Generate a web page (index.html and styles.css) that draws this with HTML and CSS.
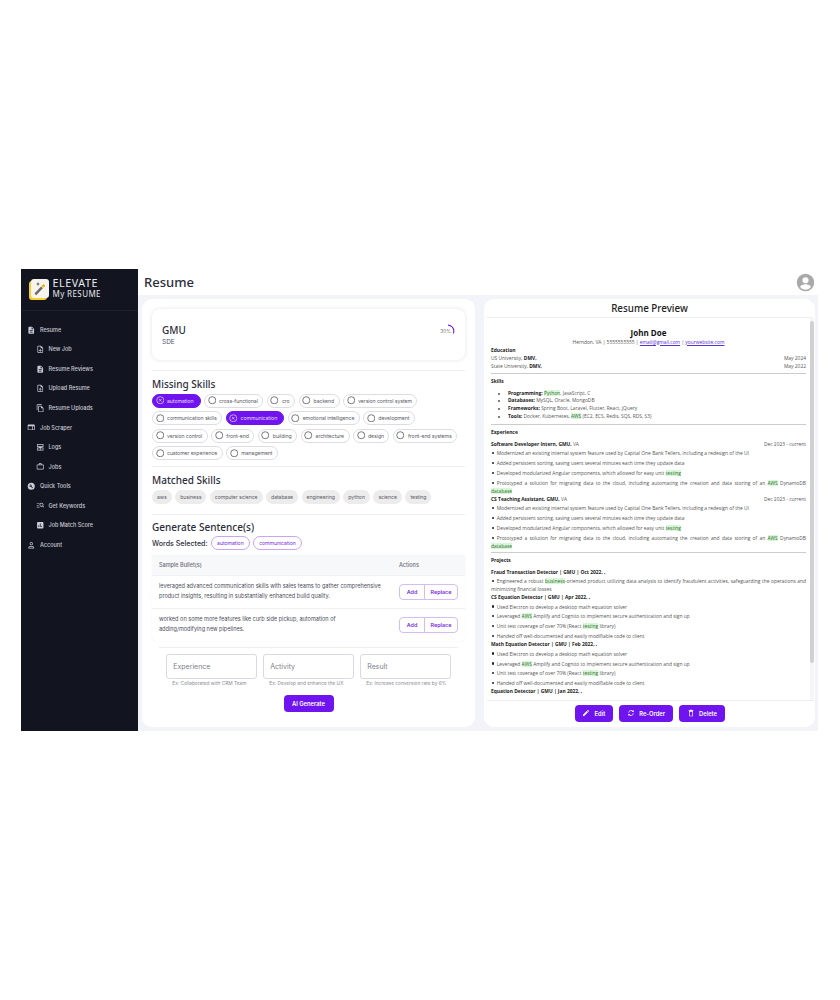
FILE: index.html
```html
<!DOCTYPE html>
<html lang="en">
<head>
    <meta charset="UTF-8">
    <meta name="viewport" content="width=device-width, initial-scale=1.0">
    <title>Elevate My Resume</title>
    <link rel="stylesheet" href="styles.css">
</head>
<body>
    <svg class="sprites" width="0" height="0">
        <symbol id="i-doc" viewBox="0 0 24 24"><path d="M14 2H6c-1.1 0-2 .9-2 2v16c0 1.1.9 2 2 2h12c1.1 0 2-.9 2-2V8l-6-6zm2 16H8v-2h8v2zm0-4H8v-2h8v2zm-3-5V3.5L18.5 9H13z"/></symbol>
        <symbol id="i-add" viewBox="0 0 24 24"><path d="M14 2H6c-1.1 0-2 .9-2 2v16c0 1.1.9 2 2 2h12c1.1 0 2-.9 2-2V8l-6-6zm4 18H6V4h7v5h5v11zM13 11h-2v3H8v2h3v3h2v-3h3v-2h-3z"/></symbol>
        <symbol id="i-upload" viewBox="0 0 24 24"><path d="M14 2H6c-1.1 0-2 .9-2 2v16c0 1.1.9 2 2 2h12c1.1 0 2-.9 2-2V8l-6-6zm4 18H6V4h7v5h5v11zM8 15l1.4 1.4L11 14.8V19h2v-4.2l1.6 1.6L16 15l-4-4z"/></symbol>
        <symbol id="i-copy" viewBox="0 0 24 24"><path d="M16 1H4c-1.1 0-2 .9-2 2v14h2V3h12V1zm-1 4l6 6v10c0 1.1-.9 2-2 2H8c-1.1 0-2-.9-2-2V7c0-1.1.9-2 2-2h7zm-1 7V7H8v14h11v-9h-5z"/></symbol>
        <symbol id="i-scraper" viewBox="0 0 24 24"><path d="M20 4H4c-1.1 0-2 .9-2 2v12c0 1.1.9 2 2 2h16c1.100 0 2-.9 2-2V6c0-1.100-.9-2-2-2zM4 18V9h11v9H4zm16 0h-3V9h3v9z"/></symbol>
        <symbol id="i-logs" viewBox="0 0 24 24"><path d="M3 3h18v8H3V3zm2 2v4h14V5H5zm-2 8h18v8H3v-8zm2 2v4h6v-4H5zm8 0v4h6v-4h-6zM8 11h8v2H8z"/></symbol>
        <symbol id="i-jobs" viewBox="0 0 24 24"><path d="M20 7h-4V5c0-1.100-.9-2-2-2h-4c-1.100 0-2 .9-2 2v2H4c-1.100 0-2 .9-2 2v10c0 1.100.9 2 2 2h16c1.100 0 2-.9 2-2V9c0-1.100-.9-2-2-2zM10 5h4v2h-4V5zm10 14H4V9h16v10z"/></symbol>
        <symbol id="i-tools" viewBox="0 0 24 24"><path d="M12 2a10 10 0 100 20 10 10 0 000-20zm4.700 14.300l-1.400 1.400-4.100-4.100c-1.200.4-2.600.2-3.600-.8-1-1-1.300-2.500-.8-3.800l2.300 2.300 1.500-1.500-2.300-2.300c1.300-.5 2.800-.2 3.800.8 1 1 1.300 2.400.8 3.600l3.800 4.400z"/></symbol>
        <symbol id="i-keywords" viewBox="0 0 24 24"><path d="M2 6h8v2H2V6zm0 5h6v2H2v-2zm0 5h8v2H2v-2zm13.500-11a5.500 5.500 0 014.400 8.800l2.800 2.800-1.400 1.400-2.800-2.800A5.500 5.500 0 1115.500 5zm0 2a3.500 3.500 0 100 7 3.500 3.500 0 000-7z"/></symbol>
        <symbol id="i-score" viewBox="0 0 24 24"><path d="M19 3H5c-1.100 0-2 .9-2 2v14c0 1.100.9 2 2 2h14c1.100 0 2-.9 2-2V5c0-1.100-.9-2-2-2zM9 17H7v-5h2v5zm4 0h-2V7h2v10zm4 0h-2v-3h2v3z"/></symbol>
        <symbol id="i-account" viewBox="0 0 24 24"><path d="M12 3a4.500 4.500 0 110 9 4.500 4.500 0 010-9zm0 2a2.500 2.500 0 100 5 2.500 2.500 0 000-5zM4 21v-3c0-2.700 5.300-4 8-4s8 1.300 8 4v3H4zm2-2h12v-1c0-.8-3-2-6-2s-6 1.200-6 2v1z"/></symbol>
        <symbol id="i-circle" viewBox="0 0 24 24"><circle cx="12" cy="12" r="10" fill="none" stroke="currentColor" stroke-width="2"/></symbol>
        <symbol id="i-cancel" viewBox="0 0 24 24"><circle cx="12" cy="12" r="10" fill="none" stroke="currentColor" stroke-width="2"/><path d="M8.500 8.500l7 7m0-7l-7 7" fill="none" stroke="currentColor" stroke-width="2"/></symbol>
    </svg>

    <div class="app">
        <!-- Sidebar -->
        <aside class="sidebar">
            <div class="brand">
                <div class="logo">
                    <svg viewBox="0 0 20 22" width="20" height="22">
                        <rect x="0" y="3" width="18" height="19" rx="3" fill="#f7cf2f"/>
                        <rect x="2" y="1" width="18" height="19" rx="3" fill="#f6f4ec"/>
                        <path d="M5.500 15.500L12 8.500l1.800 1.700-6.600 7z" fill="#6b6b6b"/>
                        <path d="M12.500 8l2-2 1.800 1.700-2 2z" fill="#e8b400"/>
                        <path d="M9 4l.6 1.500L11 6l-1.400.6L9 8l-.6-1.400L7 6l1.400-.5z" fill="#555"/>
                    </svg>
                </div>
                <div class="brand-text">
                    <div class="brand-top">ELEVATE</div>
                    <div class="brand-bottom">My RESUME</div>
                </div>
            </div>
            <nav class="nav">
                <a class="nav-item"><svg class="nav-icon"><use href="#i-doc"/></svg>Resume</a>
                <a class="nav-item sub"><svg class="nav-icon"><use href="#i-add"/></svg>New Job</a>
                <a class="nav-item sub"><svg class="nav-icon"><use href="#i-doc"/></svg>Resume Reviews</a>
                <a class="nav-item sub"><svg class="nav-icon"><use href="#i-upload"/></svg>Upload Resume</a>
                <a class="nav-item sub"><svg class="nav-icon"><use href="#i-copy"/></svg>Resume Uploads</a>
                <a class="nav-item"><svg class="nav-icon"><use href="#i-scraper"/></svg>Job Scraper</a>
                <a class="nav-item sub"><svg class="nav-icon"><use href="#i-logs"/></svg>Logs</a>
                <a class="nav-item sub"><svg class="nav-icon"><use href="#i-jobs"/></svg>Jobs</a>
                <a class="nav-item"><svg class="nav-icon"><use href="#i-tools"/></svg>Quick Tools</a>
                <a class="nav-item sub"><svg class="nav-icon"><use href="#i-keywords"/></svg>Get Keywords</a>
                <a class="nav-item sub"><svg class="nav-icon"><use href="#i-score"/></svg>Job Match Score</a>
                <a class="nav-item"><svg class="nav-icon"><use href="#i-account"/></svg>Account</a>
            </nav>
        </aside>

        <div class="main">
            <header class="topbar">
                <h1>Resume</h1>
                <svg class="avatar" viewBox="0 0 24 24"><path d="M12 2a10 10 0 100 20 10 10 0 000-20zm0 4a3.500 3.500 0 110 7 3.500 3.500 0 010-7zm0 14.200c-2.500 0-4.700-1.300-6-3.200 0-2 4-3.100 6-3.100s6 1.100 6 3.100c-1.300 1.900-3.500 3.200-6 3.200z"/></svg>
            </header>

            <div class="content">
                <!-- Left column -->
                <section class="panel left">
                    <div class="job-card">
                        <div>
                            <div class="job-company">GMU</div>
                            <div class="job-role">SDE</div>
                        </div>
                        <div class="score">
                            <svg viewBox="0 0 14 14" width="14" height="14"><path d="M7 1.200A5.800 5.800 0 0112.800 7 5.800 5.800 0 0112.300 9.400" fill="none" stroke="#7a2be8" stroke-width="1.200"/></svg>
                            <span>30%</span>
                        </div>
                    </div>
                    <hr class="rule">

                    <h2>Missing Skills</h2>
                    <div class="chips">
                        <span class="chip on"><svg class="chip-icon"><use href="#i-cancel"/></svg>automation</span>
                        <span class="chip"><svg class="chip-icon"><use href="#i-circle"/></svg>cross-functional</span>
                        <span class="chip"><svg class="chip-icon"><use href="#i-circle"/></svg>cro</span>
                        <span class="chip"><svg class="chip-icon"><use href="#i-circle"/></svg>backend</span>
                        <span class="chip"><svg class="chip-icon"><use href="#i-circle"/></svg>version control system</span>
                        <span class="chip"><svg class="chip-icon"><use href="#i-circle"/></svg>communication skills</span>
                        <span class="chip on"><svg class="chip-icon"><use href="#i-cancel"/></svg>communication</span>
                        <span class="chip"><svg class="chip-icon"><use href="#i-circle"/></svg>emotional intelligence</span>
                        <span class="chip"><svg class="chip-icon"><use href="#i-circle"/></svg>development</span>
                        <span class="chip"><svg class="chip-icon"><use href="#i-circle"/></svg>version control</span>
                        <span class="chip"><svg class="chip-icon"><use href="#i-circle"/></svg>front-end</span>
                        <span class="chip"><svg class="chip-icon"><use href="#i-circle"/></svg>building</span>
                        <span class="chip"><svg class="chip-icon"><use href="#i-circle"/></svg>architecture</span>
                        <span class="chip"><svg class="chip-icon"><use href="#i-circle"/></svg>design</span>
                        <span class="chip"><svg class="chip-icon"><use href="#i-circle"/></svg>front-end systems</span>
                        <span class="chip"><svg class="chip-icon"><use href="#i-circle"/></svg>customer experience</span>
                        <span class="chip"><svg class="chip-icon"><use href="#i-circle"/></svg>management</span>
                    </div>
                    <hr class="rule tight">

                    <h2>Matched Skills</h2>
                    <div class="chips">
                        <span class="chip grey">aws</span>
                        <span class="chip grey">business</span>
                        <span class="chip grey">computer science</span>
                        <span class="chip grey">database</span>
                        <span class="chip grey">engineering</span>
                        <span class="chip grey">python</span>
                        <span class="chip grey">science</span>
                        <span class="chip grey">testing</span>
                    </div>
                    <hr class="rule">

                    <h2>Generate Sentence(s)</h2>
                    <div class="words">
                        <span class="words-label">Words Selected:</span>
                        <span class="chip line">automation</span>
                        <span class="chip line">communication</span>
                    </div>

                    <div class="bullets">
                        <div class="bullets-head">
                            <span>Sample Bullet(s)</span>
                            <span class="actions-label">Actions</span>
                        </div>
                        <div class="bullet-row">
                            <p>leveraged advanced communication skills with sales teams to gather comprehensive product insights, resulting in substantially enhanced build quality.</p>
                            <div class="btn-group"><button>Add</button><button>Replace</button></div>
                        </div>
                        <div class="bullet-row">
                            <p>worked on some more features like curb side pickup, automation of adding/modifying new pipelines.</p>
                            <div class="btn-group"><button>Add</button><button>Replace</button></div>
                        </div>
                    </div>

                    <div class="generate">
                        <div class="fields">
                            <div class="field"><div class="input">Experience</div><small>Ex: Collaborated with CRM Team</small></div>
                            <div class="field"><div class="input">Activity</div><small>Ex: Develop and enhance the UX</small></div>
                            <div class="field"><div class="input">Result</div><small>Ex: Increase conversion rate by 6%</small></div>
                        </div>
                        <button class="primary ai">AI Generate</button>
                    </div>
                </section>

                <!-- Right column -->
                <section class="panel right">
                    <div class="preview-title">Resume Preview</div>
                    <div class="preview-body">
                        <div class="preview">
                            <div class="cv-name">John Doe</div>
                            <div class="cv-contact">Herndon, VA | 5555555555 | <a>email@gmail.com</a> | <a>yourwebsite.com</a></div>

                            <div class="cv-section">Education</div>
                            <div class="cv-line"><span>US University, <b>DMV,</b></span><span>May 2024</span></div>
                            <div class="cv-line"><span>State University, <b>DMV,</b></span><span>May 2022</span></div>
                            <hr class="cv-rule">

                            <div class="cv-section spaced">Skills</div>
                            <ul class="cv-skills">
                                <li><b>Programming:</b> <mark>Python</mark>, JavaScript, C</li>
                                <li><b>Databases:</b> MySQL, Oracle, MongoDB</li>
                                <li><b>Frameworks:</b> Spring Boot, Laravel, Flutter, React, jQuery</li>
                                <li><b>Tools:</b> Docker, Kubernetes, <mark>AWS</mark> (EC2, ECS, Redis, SQS, RDS, S3)</li>
                            </ul>
                            <hr class="cv-rule">

                            <div class="cv-section spaced">Experience</div>
                            <div class="cv-line"><span><b>Software Developer Intern, GMU,</b> VA</span><span>Dec 2023 - current</span></div>
                            <p class="cv-b">Modernized an existing internal system feature used by Capital One Bank Tellers, including a redesign of the UI</p>
                            <p class="cv-b">Added persistent sorting, saving users several minutes each time they update data</p>
                            <p class="cv-b">Developed modularized Angular components, which allowed for easy unit <mark>testing</mark></p>
                            <p class="cv-b just">Prototyped a solution for migrating data to the cloud, including automating the creation and data storing of an <mark>AWS</mark> DynamoDB <mark>database</mark></p>
                            <div class="cv-line"><span><b>CS Teaching Assistant, GMU,</b> VA</span><span>Dec 2023 - current</span></div>
                            <p class="cv-b">Modernized an existing internal system feature used by Capital One Bank Tellers, including a redesign of the UI</p>
                            <p class="cv-b">Added persistent sorting, saving users several minutes each time they update data</p>
                            <p class="cv-b">Developed modularized Angular components, which allowed for easy unit <mark>testing</mark></p>
                            <p class="cv-b just">Prototyped a solution for migrating data to the cloud, including automating the creation and data storing of an <mark>AWS</mark> DynamoDB <mark>database</mark></p>
                            <hr class="cv-rule">

                            <div class="cv-section spaced">Projects</div>
                            <div class="cv-line"><b>Fraud Transaction Detector | GMU | Oct 2022, ,</b></div>
                            <p class="cv-b just">Engineered a robust <mark>business</mark>-oriented product utilizing data analysis to identify fraudulent activities, safeguarding the operations and minimizing financial losses</p>
                            <div class="cv-line"><b>CS Equation Detector | GMU | Apr 2022, ,</b></div>
                            <p class="cv-b">Used Electron to develop a desktop math equation solver</p>
                            <p class="cv-b">Leveraged <mark>AWS</mark> Amplify and Cognito to implement secure authentication and sign up</p>
                            <p class="cv-b">Unit test coverage of over 70% (React <mark>testing</mark> library)</p>
                            <p class="cv-b">Handed off well-documented and easily modifiable code to client</p>
                            <div class="cv-line"><b>Math Equation Detector | GMU | Feb 2022, ,</b></div>
                            <p class="cv-b">Used Electron to develop a desktop math equation solver</p>
                            <p class="cv-b">Leveraged <mark>AWS</mark> Amplify and Cognito to implement secure authentication and sign up</p>
                            <p class="cv-b">Unit test coverage of over 70% (React <mark>testing</mark> library)</p>
                            <p class="cv-b">Handed off well-documented and easily modifiable code to client</p>
                            <div class="cv-line"><b>Equation Detector | GMU | Jan 2022, ,</b></div>
                        </div>
                        <div class="scroll-track"><div class="scroll-thumb"></div></div>
                    </div>
                    <div class="preview-actions">
                        <button class="primary">
                            <svg viewBox="0 0 24 24"><path d="M3 17.250V21h3.750L17.800 9.940l-3.750-3.750L3 17.250zM20.700 7.040a1 1 0 000-1.410l-2.340-2.340a1 1 0 00-1.410 0l-1.830 1.830 3.750 3.750 1.830-1.830z"/></svg>Edit
                        </button>
                        <button class="primary">
                            <svg viewBox="0 0 24 24"><path d="M5 11a7.500 7.500 0 0113.500-3.500M19 13a7.500 7.500 0 01-13.500 3.500" fill="none" stroke="#fff" stroke-width="2.400"/><path d="M20 3v6h-6zM4 21v-6h6z"/></svg>Re-Order
                        </button>
                        <button class="primary">
                            <svg viewBox="0 0 24 24"><path d="M6 20c0 1.100.9 2 2 2h8c1.100 0 2-.9 2-2V6H6v14zm2-12h8v12H8V8zm7-6H9v2h6V2zM5 4h14v2H5z"/></svg>Delete
                        </button>
                    </div>
                </section>
            </div>
        </div>
    </div>
</body>
</html>
```

FILE: styles.css
```css
* {
    box-sizing: border-box;
}

body {
    margin: 0;
    background: #ffffff;
    font-family: 'Inter', sans-serif;
    color: #2b2d3a;
}

.sprites {
    position: absolute;
}

.app {
    display: flex;
    width: 797px;
    height: 462px;
    margin: 269px 0 0 21px;
}

/* Sidebar */
.sidebar {
    width: 117px;
    flex-shrink: 0;
    background: #12141f;
    color: #c9ccd6;
}

.brand {
    display: flex;
    align-items: center;
    gap: 3.500px;
    height: 42px;
    padding: 0 0 2px 8px;
    border-bottom: 1px solid #1c1f2c;
}

.logo {
    width: 20px;
    height: 22px;
    line-height: 0;
}

.brand-text {
    color: #e8e9ee;
    font-family: 'Noto Sans', sans-serif;
}

.brand-top {
    font-size: 10.700px;
    letter-spacing: 0.600px;
    line-height: 10.300px;
}

.brand-bottom {
    font-size: 8px;
    letter-spacing: 0.400px;
    line-height: 10.300px;
}

.nav {
    padding-top: 9px;
}

.nav-item {
    display: flex;
    align-items: center;
    gap: 4.500px;
    height: 19.550px;
    padding-left: 6px;
    font-size: 5.500px;
    font-weight: 500;
}

.nav-item.sub {
    padding-left: 14.500px;
}

.nav-icon {
    width: 8.500px;
    height: 8.500px;
    fill: #c9ccd6;
    flex-shrink: 0;
}

/* Main */
.main {
    flex: 1;
    display: flex;
    flex-direction: column;
    min-width: 0;
    min-height: 0;
    background: #f3f4f9;
}

.topbar {
    display: flex;
    flex-shrink: 0;
    justify-content: space-between;
    align-items: center;
    height: 26px;
    padding: 0 2px 0 6px;
    background: #ffffff;
}

.topbar h1 {
    margin: 0;
    font-family: 'Noto Sans', sans-serif;
    font-size: 13px;
    font-weight: 500;
    color: #2b2d3a;
}

.avatar {
    width: 21px;
    height: 21px;
    fill: #a9a9a9;
}

.content {
    flex: 1;
    display: flex;
    gap: 9px;
    min-height: 0;
    padding: 4px 3px 4px 4px;
}

.panel {
    min-height: 0;
    background: #ffffff;
    border-radius: 10px;
}

.panel.left {
    width: 333px;
    padding: 10px;
}

.panel.right {
    width: 331px;
    display: flex;
    flex-direction: column;
}

/* Left column */
.job-card {
    display: flex;
    justify-content: space-between;
    height: 51px;
    padding: 15px 10px;
    border-radius: 8px;
    box-shadow: 0 0 4px rgba(40, 40, 80, 0.130);
}

.job-company {
    font-family: 'Noto Sans', sans-serif;
    font-size: 10px;
    line-height: 12px;
    font-weight: 500;
}

.job-role {
    margin-top: 2px;
    font-size: 6.500px;
    line-height: 8px;
    color: #55586a;
}

.score {
    position: relative;
    width: 14px;
    height: 14px;
    margin-top: -2px;
}

.score span {
    position: absolute;
    right: 4px;
    top: 6px;
    font-size: 4.800px;
    color: #777;
}

.rule {
    margin: 10px 0 0;
    border: none;
    border-top: 1px solid #eceef2;
}

.rule.tight {
    margin-top: 6px;
}

h2 {
    margin: 5.500px 0 3px;
    font-family: 'Noto Sans', sans-serif;
    font-size: 10px;
    line-height: 14px;
    font-weight: 500;
    color: #2b2d3a;
}

.chips {
    display: flex;
    flex-wrap: wrap;
    gap: 3.500px;
}

.chip {
    display: inline-flex;
    align-items: center;
    gap: 3px;
    height: 14px;
    padding: 0 4.500px 0 2.500px;
    border: 1px solid #dcdde2;
    border-radius: 7px;
    font-size: 5.200px;
    letter-spacing: -0.080px;
    color: #5b5d68;
    background: #ffffff;
}

.chip-icon {
    width: 8.500px;
    height: 8.500px;
    color: #44454e;
}

.chip.on {
    padding-right: 6px;
    background: #6f14ef;
    border-color: #6f14ef;
    color: #e6dafb;
}

.chip.on .chip-icon {
    color: #e6dafb;
}

.chip.grey {
    padding: 0 5px;
    border: none;
    background: #ececec;
}

.chip.line {
    padding: 0 5px;
    border-color: #c9a5ef;
    color: #7a2fe0;
}

.words {
    display: flex;
    align-items: center;
    gap: 3.500px;
    margin-top: -1px;
}

.words-label {
    font-size: 7.100px;
    font-weight: 500;
}

.bullets {
    margin-top: 4.500px;
    border-radius: 4px;
    box-shadow: 0 0 1px rgba(40, 40, 80, 0.150);
}

.bullets-head {
    display: flex;
    height: 20px;
    align-items: center;
    padding: 0 7px;
    background: #f7f8fa;
    font-size: 5.500px;
    font-weight: 500;
    color: #6a6c78;
}

.bullets-head span:first-child {
    flex: 1;
}

.actions-label {
    width: 59px;
}

.bullet-row {
    display: flex;
    align-items: center;
    height: 33px;
    padding: 0 7px;
    border-top: 1px solid #eff0f3;
}

.bullet-row p {
    flex: 1;
    margin: 0;
    padding-right: 17px;
    font-size: 5.550px;
    line-height: 9.700px;
    color: #4a4c58;
}

.btn-group {
    display: flex;
    width: 59px;
    height: 16px;
    flex-shrink: 0;
    border: 1px solid #d5bdf3;
    border-radius: 4px;
}

.btn-group button {
    border: none;
    padding: 0;
    background: none;
    font-family: inherit;
    font-size: 5.400px;
    font-weight: 600;
    color: #7a2fe0;
}

.btn-group button:first-child {
    width: 25px;
    border-right: 1px solid #d5bdf3;
}

.btn-group button:last-child {
    flex: 1;
}

.generate {
    margin: 6px 7px 0;
    padding-top: 6px;
    border-top: 1px solid #eceef2;
    text-align: center;
}

.fields {
    display: flex;
    justify-content: center;
    gap: 6.500px;
}

.field {
    width: 90.500px;
    text-align: left;
}

.input {
    height: 25px;
    padding: 0 6px;
    border: 1px solid #d9dae0;
    border-radius: 3px;
    font-size: 7px;
    line-height: 23px;
    color: #7d7f8a;
}

.field small {
    display: block;
    margin-top: 1px;
    padding-left: 6px;
    font-size: 4.800px;
    line-height: 6px;
    color: #8a8c96;
    white-space: nowrap;
}

.primary {
    display: inline-flex;
    align-items: center;
    justify-content: center;
    gap: 4.500px;
    height: 17.500px;
    padding: 0 7.500px;
    border: none;
    border-radius: 4px;
    background: #6f14ef;
    font-family: inherit;
    font-size: 5.800px;
    font-weight: 600;
    color: #ffffff;
}

.primary svg {
    width: 8px;
    height: 8px;
    fill: #ffffff;
}

.primary.ai {
    width: 50px;
    margin-top: 9px;
    padding: 0;
}

/* Resume preview */
.preview-title {
    flex-shrink: 0;
    height: 19px;
    margin: 0 3px;
    border-bottom: 1px solid #eceef2;
    font-family: 'Noto Sans', sans-serif;
    font-size: 9.800px;
    font-weight: 500;
    line-height: 20px;
    text-align: center;
    color: #222;
}

.preview-body {
    flex: 1;
    display: flex;
    min-height: 0;
    margin: 0 1px 0 3px;
    border-bottom: 1px solid #eceef2;
}

.preview {
    flex: 1;
    min-width: 0;
    padding: 9.500px 4px 0 4px;
    overflow: hidden;
    font-family: 'Open Sans', sans-serif;
    font-size: 4.900px;
    color: #555;
}

.scroll-track {
    width: 4px;
    flex-shrink: 0;
    padding-top: 3px;
    background: #f6f6f6;
}

.scroll-thumb {
    height: 342px;
    border-radius: 2px;
    background: #d0d0d0;
}

.preview b {
    color: #222;
}

.preview mark {
    background: #d8f7d8;
    color: #2f6b2f;
}

.cv-name {
    font-size: 8px;
    line-height: 10px;
    font-weight: 700;
    text-align: center;
    color: #111;
}

.cv-contact {
    text-align: center;
    line-height: 8px;
}

.cv-contact a {
    color: #5a2fd0;
    text-decoration: underline;
}

.cv-section {
    font-weight: 700;
    line-height: 8px;
    color: #222;
}

.cv-section.spaced {
    margin: 3px 0 5px;
}

.cv-line {
    display: flex;
    justify-content: space-between;
    line-height: 7.500px;
}

.cv-contact + .cv-section {
    margin-bottom: 1.500px;
}

.cv-rule {
    margin: 2.500px 0 3px;
    border: none;
    border-top: 1px solid #cccccc;
}

.cv-b + .cv-rule {
    margin-top: 1px;
}

.cv-skills {
    margin: 0 0 1.500px;
    padding-left: 17px;
    line-height: 7.900px;
}

.cv-b {
    margin: 0;
    padding: 2px 0 0;
    line-height: 7.900px;
}

.cv-b::before {
    content: "";
    display: inline-block;
    width: 2.200px;
    height: 2.200px;
    margin: 0 3px 0 0.500px;
    border-radius: 50%;
    background: #222;
    vertical-align: 1px;
}

.cv-b.just {
    text-align: justify;
}

.preview-actions {
    display: flex;
    flex-shrink: 0;
    justify-content: center;
    gap: 6.500px;
    padding: 4px 0 5px;
}
```
